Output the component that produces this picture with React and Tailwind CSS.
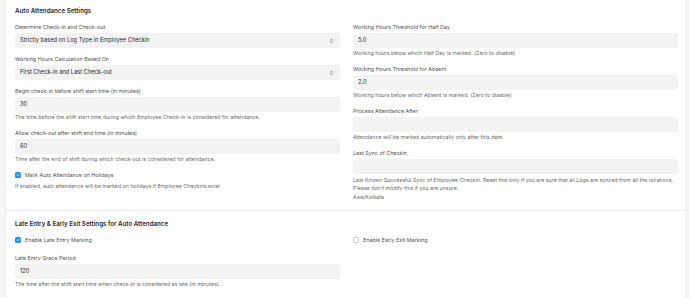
import { useState } from "react";

function Label({ children }) {
    return <div className="text-[5.4px] leading-[8px] text-[#525252] mb-[2px]">{children}</div>;
}

function Description({ children }) {
    return <div className="text-[5.3px] leading-[8px] text-[#6b6b6b] mt-[1px] mb-[1px]">{children}</div>;
}

function Input({ value }) {
    return (
        <div className="h-[15px] rounded-[3px] bg-[#f3f3f3] px-[5px] flex items-center text-[5.7px] text-[#1f272e]">
            {value}
        </div>
    );
}

function Select({ value }) {
    return (
        <div className="h-[15px] rounded-[3px] bg-[#f3f3f3] pl-[5px] pr-[6px] flex items-center justify-between text-[5.7px] text-[#1f272e]">
            <span>{value}</span>
            <svg width="5" height="6" viewBox="0 0 10 12" fill="none" stroke="#525252" strokeWidth="1.4" strokeLinecap="round" strokeLinejoin="round">
                <path d="M3 4.5 L5 2.5 L7 4.5" />
                <path d="M3 7.5 L5 9.5 L7 7.5" />
            </svg>
        </div>
    );
}

function Field({ label, value, description, select }) {
    return (
        <div>
            <Label>{label}</Label>
            {select ? <Select value={value} /> : <Input value={value} />}
            {description && <Description>{description}</Description>}
        </div>
    );
}

function Checkbox({ label, checked }) {
    return (
        <div className="flex items-center gap-[4px] h-[8px]">
            {checked ? (
                <span className="w-[6px] h-[6px] rounded-[1.5px] bg-[#2490ef] flex items-center justify-center">
                    <svg width="4" height="4" viewBox="0 0 8 8" fill="none" stroke="white" strokeWidth="1.6" strokeLinecap="round" strokeLinejoin="round">
                        <path d="M1.8 4.2 L3.3 5.6 L6.2 2.4" />
                    </svg>
                </span>
            ) : (
                <span className="w-[6px] h-[6px] rounded-[1.5px] bg-white border border-[#c7c7c7]" />
            )}
            <span className="text-[5.4px] text-[#525252]">{label}</span>
        </div>
    );
}

export default function App() {
    const [lateEntry] = useState(true);

    return (
        <div className="min-h-screen bg-[#f8f8f8] pl-[5px] pr-[3px] font-['Inter',sans-serif]">
            <div className="bg-white border-x border-b border-[#ebebeb] rounded-b-[4px]">
                {/* Auto Attendance */}
                <div className="pl-[9px] pr-[8px] pt-[7px] pb-[9px] border-b border-[#ededed]">
                    <div className="text-[6.2px] leading-[8px] font-semibold text-[#1f272e] mb-[8px]">Auto Attendance Settings</div>
                    <div className="grid grid-cols-2 gap-x-[13px]">
                        <div className="flex flex-col gap-[7px]">
                            <Field label="Determine Check-in and Check-out" value="Strictly based on Log Type in Employee Checkin" select />
                            <Field label="Working Hours Calculation Based On" value="First Check-in and Last Check-out" select />
                            <Field
                                label="Begin check-in before shift start time (in minutes)"
                                value="30"
                                description="The time before the shift start time during which Employee Check-in is considered for attendance."
                            />
                            <Field
                                label="Allow check-out after shift end time (in minutes)"
                                value="60"
                                description="Time after the end of shift during which check-out is considered for attendance."
                            />
                            <div>
                                <Checkbox label="Mark Auto Attendance on Holidays" checked />
                                <div className="text-[5.3px] leading-[8px] text-[#6b6b6b] mt-[3px]">
                                    If enabled, auto attendance will be marked on holidays if Employee Checkins exist
                                </div>
                            </div>
                        </div>
                        <div className="flex flex-col gap-[7px]">
                            <Field
                                label="Working Hours Threshold for Half Day"
                                value="5.0"
                                description="Working hours below which Half Day is marked. (Zero to disable)"
                            />
                            <Field
                                label="Working Hours Threshold for Absent"
                                value="2.0"
                                description="Working hours below which Absent is marked. (Zero to disable)"
                            />
                            <Field
                                label="Process Attendance After"
                                value=""
                                description="Attendance will be marked automatically only after this date."
                            />
                            <div>
                                <Label>Last Sync of Checkin</Label>
                                <Input value="" />
                                <div className="text-[5.3px] leading-[8px] text-[#6b6b6b] mt-[2px]">
                                    Last Known Successful Sync of Employee Checkin. Reset this only if you are sure that all Logs are synced from all the locations.
                                    <br />
                                    Please don't modify this if you are unsure.
                                </div>
                                <div className="text-[5.3px] leading-[8px] text-[#6b6b6b] mt-[1px]">Asia/Kolkata</div>
                            </div>
                        </div>
                    </div>
                </div>

                {/* Late Entry & Early Exit */}
                <div className="pl-[9px] pr-[8px] pt-[9px] pb-[9px]">
                    <div className="text-[6.2px] leading-[8px] font-semibold text-[#1f272e] mb-[8px]">
                        Late Entry &amp; Early Exit Settings for Auto Attendance
                    </div>
                    <div className="grid grid-cols-2 gap-x-[13px]">
                        <div>
                            <Checkbox label="Enable Late Entry Marking" checked={lateEntry} />
                            <div className="mt-[10px]">
                                <Field
                                    label="Late Entry Grace Period"
                                    value="120"
                                    description="The time after the shift start time when check-in is considered as late (in minutes)."
                                />
                            </div>
                        </div>
                        <div>
                            <Checkbox label="Enable Early Exit Marking" checked={false} />
                        </div>
                    </div>
                </div>
            </div>
        </div>
    );
}
